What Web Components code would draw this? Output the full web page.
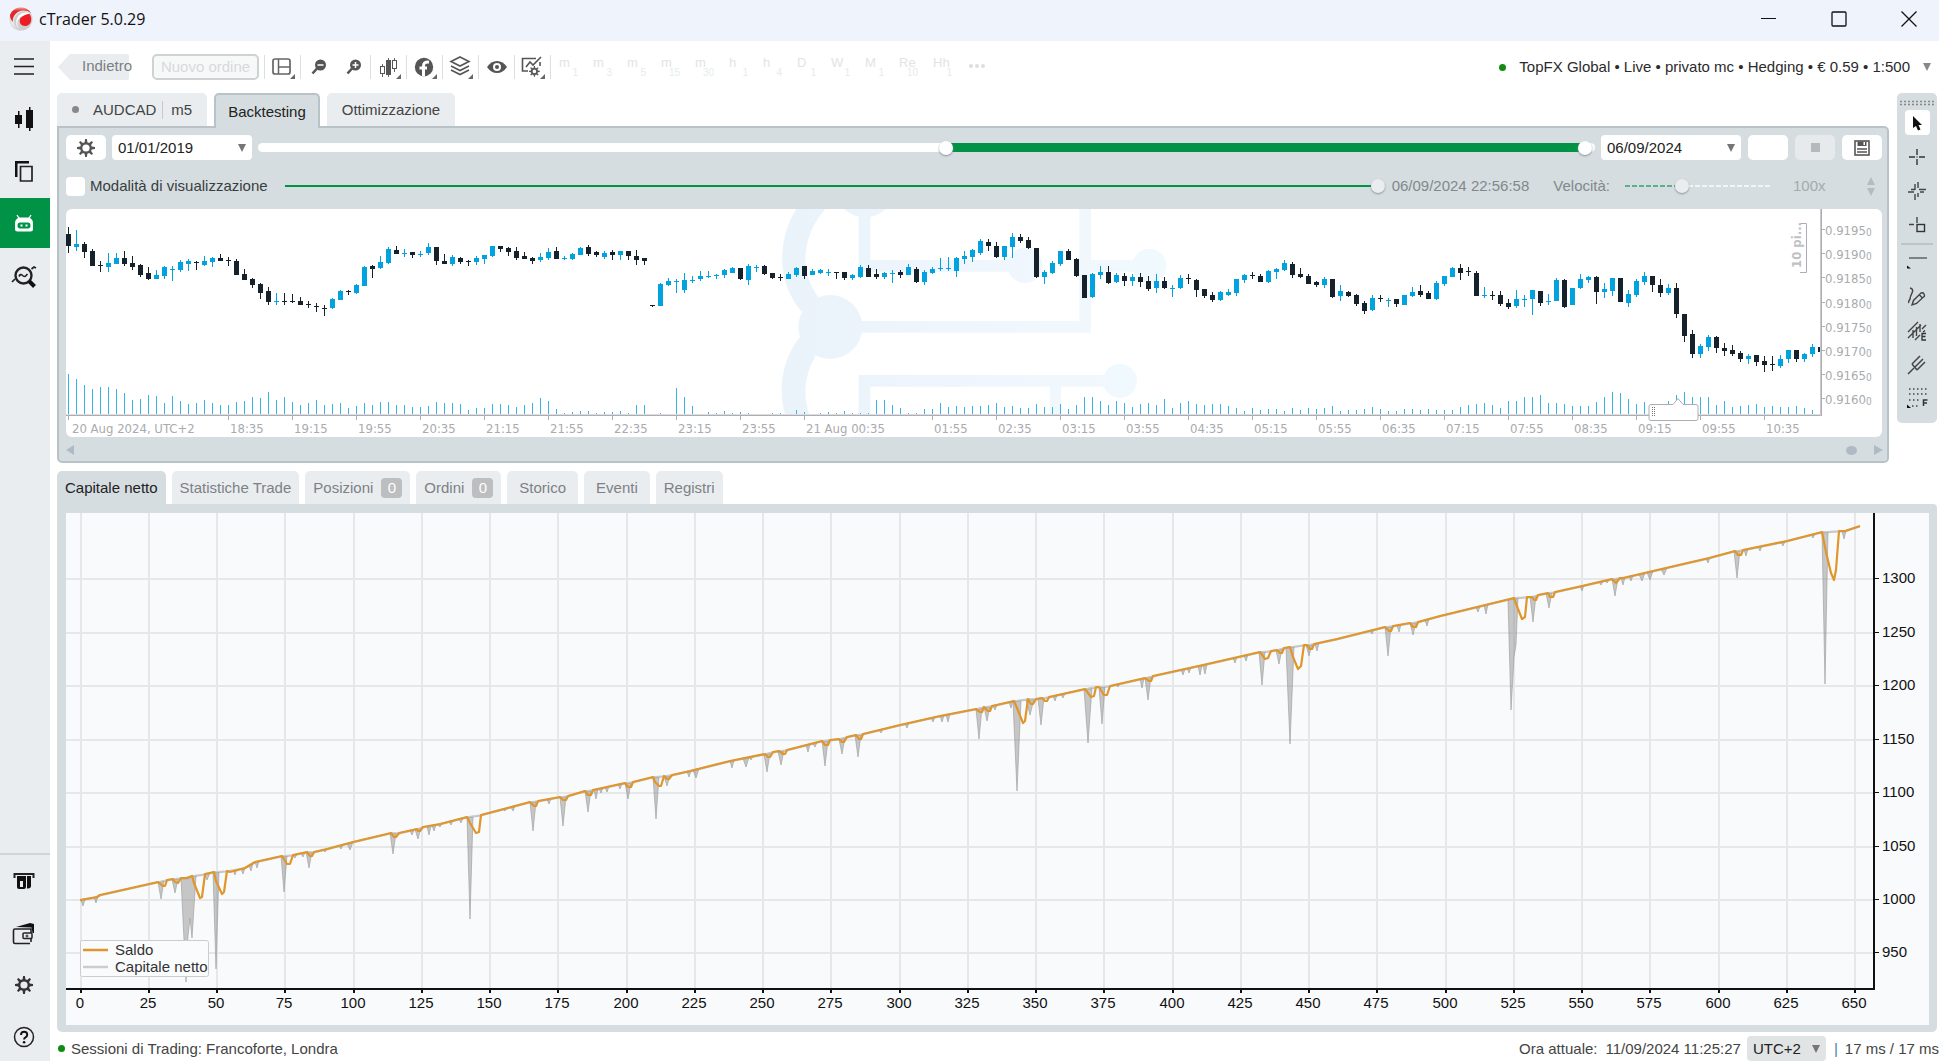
<!DOCTYPE html>
<html lang="it">
<head>
<meta charset="utf-8">
<title>cTrader 5.0.29</title>
<style>
  html, body { margin: 0; height: 100%; }
  body { font: 15px/18px "Liberation Sans", Arial, sans-serif; color: #333; background: #fff; overflow: hidden; }
</style>
</head>
<body>
<ct-app></ct-app>
<script>
const BASE = `
  *, *::before { box-sizing: border-box; }
  button, select, input { font: inherit; color: inherit; margin: 0; padding: 0; border: 0; background: none; border-radius: 0; outline: none; }
  select { appearance: none; }
  svg { display: block; }
`;

class CtElement extends HTMLElement {
  constructor() {
    super();
    this.attachShadow({ mode: 'open' });
  }
  connectedCallback() {
    this.shadowRoot.innerHTML = `<style>${BASE}${this.css()}</style>${this.html()}`;
    this.ready();
  }
  css() { return ''; }
  html() { return ''; }
  ready() {}
}

/* ---------- icons: [width, height, markup] ---------- */
const gearTeeth = (cx, cy, r1, r2, n) => {
  let d = '';
  for (let i = 0; i < n; i++) {
    const a = (i / n) * 2 * Math.PI - Math.PI / 2, w = Math.PI / n;
    const p = (r, t) => (cx + r * Math.cos(t)).toFixed(1) + ' ' + (cy + r * Math.sin(t)).toFixed(1);
    d += (i ? 'L' : 'M') + p(r1, a - w * .62) + 'L' + p(r2, a - w * .25) + 'L' + p(r2, a + w * .25) + 'L' + p(r1, a + w * .62);
  }
  return d + 'Z';
};
const gear = (s, r1, r2, ri) => `<path fill="currentColor" fill-rule="evenodd" d="${gearTeeth(s / 2, s / 2, r1, r2, 8)}M${s / 2 - ri} ${s / 2}a${ri} ${ri} 0 1 0 ${2 * ri} 0a${ri} ${ri} 0 1 0 ${-2 * ri} 0Z"/>`;
const corner = '<path fill="#666" d="M25 19v5h-5z"/>';
const ICONS = {
  logo: [24, 26, `<defs><linearGradient id="g" x1="0" y1="0" x2="0" y2="1"><stop offset="0" stop-color="#f4a39b"/><stop offset=".25" stop-color="#e2272b"/><stop offset="1" stop-color="#f0222a"/></linearGradient></defs>
    <circle cx="12" cy="13" r="11.5" fill="#cfcfcf"/><path d="M1 13A11.5 11.5 0 0 1 22 8C17 3 9 5 6 11c-2 4-1 9 2 12A11.5 11.5 0 0 1 1 13z" fill="#e9e9e9"/>
    <path d="M1 9C3 4 7 1.500 12 1.500c4.500 0 8 2 10 5.500C16 3 9 4 5 10c-1 2-1.500 4-1 6C2 14 1 12 1 9z" fill="url(#g)"/>
    <path d="M20.500 7C13 5 6 10 7.500 19c.5 2 1.500 3 2.500 4C6 17 9 10 17 9z" fill="#fff"/>
    <path d="M11 13c2-3.500 7-5 9.500-5C24 13 22 20 16 20c-4 0-6-3-5-7z" fill="#ee1c24"/>`],
  menu: [22, 20, '<path d="M1 2h20M1 9.500h20M1 17h20" stroke="#222" stroke-width="1.500" fill="none"/>'],
  trade: [20, 24, '<path fill="#111" d="M1 8h7v9H1zM4 4h1.500v17H4zM12 3h7v18h-7zM15 0h1.500v24H15z"/>'],
  copy: [20, 22, '<path fill="none" stroke="#222" stroke-width="1.700" d="M6.500 6.500h11.500v14.500H6.500z"/><path fill="#111" d="M1 1h14v2.500H3.500V17H1z"/>'],
  robot: [20, 18, '<path d="M3 1l2.500 4M17 1l-2.500 4" stroke="#fff" stroke-width="1.300"/><path fill="#fff" fill-rule="evenodd" d="M5 3.500h10Q19 5 19 9v6q0 2.500-2.500 2.500h-13Q1 17.500 1 15V9Q1 5 5 3.500zM6 8.500q-2.500 0-2.500 3T6 14.500h8q2.500 0 2.500-3t-2.500-3z"/><path fill="#fff" d="M6.500 10.500h2v2h-2zM11.500 10.500h2v2h-2z"/>'],
  analyze: [26, 24, '<circle cx="12.500" cy="10.500" r="8" fill="none" stroke="#222" stroke-width="2.400"/><path d="M18 16l5.500 5.500" stroke="#111" stroke-width="4"/><path d="M8 11.500q1.500-3 3-1.500t2.500 1.500 3-2.500" fill="none" stroke="#222" stroke-width="1.700"/><path d="M1 17l3-3M20.500 4l2.500-2 2 1" fill="none" stroke="#222" stroke-width="1.700"/>'],
  atm: [24, 18, '<path d="M2.500 6V2h19v4" fill="none" stroke="#222" stroke-width="2"/><path fill="#111" fill-rule="evenodd" d="M5 4h9v11q0 2-2 2H7q-2 0-2-2zM8 9v6h3V9zM15 4h4v10q0 2-3 2.500h-1z"/>'],
  wallet: [24, 24, '<path fill="none" stroke="#222" stroke-width="1.600" d="M18 22.500H3q-1.500 0-1.500-1.500V9.500Q1.500 8 3 8h16v4M19 18v3"/><path fill="#111" d="M4 6l14-4 4 1v9h-1.500l-1-5.500z"/><rect x="11" y="12" width="9" height="5.500" rx="1" fill="none" stroke="#222" stroke-width="1.500"/><path d="M15 13.500v3M13.500 15h3" stroke="#222"/>'],
  settings: [18, 18, gear(18, 6, 9, 3.6)],
  help: [22, 22, '<circle cx="11" cy="11" r="9.500" fill="none" stroke="#222" stroke-width="1.500"/><path d="M8 9q0-3.300 3.100-3.300T14.200 8.800Q14.200 10.500 12.500 11.300 11.100 12 11.100 13.500" fill="none" stroke="#111" stroke-width="2"/><circle cx="11.100" cy="16.200" r="1.300" fill="#111"/>'],
  layout: [26, 24, '<rect x="3" y="4" width="17" height="15" rx="2" fill="none" stroke="#666" stroke-width="1.700"/><path d="M8.500 4v15M9 12h11" stroke="#666" stroke-width="1.500"/>' + corner],
  zoomout: [16, 16, '<circle cx="9.500" cy="6" r="5.500" fill="#555"/><path d="M6 9.500L1.500 14.500" stroke="#555" stroke-width="2.600"/><path d="M6.500 6h6" stroke="#fff" stroke-width="1.500"/>'],
  zoomin: [16, 16, '<circle cx="9.500" cy="6" r="5.500" fill="#555"/><path d="M6 9.500L1.500 14.500" stroke="#555" stroke-width="2.600"/><path d="M6.500 6h6M9.500 3v6" stroke="#fff" stroke-width="1.500"/>'],
  candles: [26, 24, '<path d="M6.500 9v13M12.500 3v19M18.500 3v14" stroke="#666" stroke-width="1"/><rect x="4.500" y="11.500" width="4" height="7" fill="#fff" stroke="#555"/><rect x="10" y="5" width="5" height="15" fill="#555"/><rect x="16.500" y="5.500" width="4" height="8" fill="#fff" stroke="#555"/>' + corner],
  indicator: [26, 24, '<circle cx="12" cy="12" r="9.200" fill="#555"/><path d="M11.500 21V11q0-4.500 5.500-3.800M7.500 13h7.500" stroke="#fff" stroke-width="3" fill="none"/>' + corner],
  layers: [26, 24, '<path d="M12 2l9 4.500-9 4.500-9-4.500zM3 11l9 4.500 9-4.500M3 15l9 4.500 9-4.500" fill="none" stroke="#555" stroke-width="1.600"/>' + corner],
  eye: [22, 14, '<path fill="#555" d="M1 7Q5 1 11 1t10 6q-4 6-10 6T1 7z"/><circle cx="11" cy="7" r="4" fill="#fff"/><circle cx="11" cy="7" r="2" fill="#555"/>'],
  chartset: [26, 24, '<path d="M8 16H2.500V3.500H16M20 7v4" fill="none" stroke="#555" stroke-width="1.600"/><path d="M6 12l4-5 3 3 8-8" fill="none" stroke="#555" stroke-width="1.600"/><g transform="translate(9 11) scale(.6)" color="#555">' + gear(18, 6, 9, 3) + '</g>' + corner],
  save: [16, 16, '<rect x="1" y="1" width="14" height="14" fill="none" stroke="#555" stroke-width="1.600"/><path fill="#555" d="M3.500 1.500h9V6h-9z"/><path fill="#fff" d="M9.500 2h1.500v3H9.500z"/><path d="M3 9h10M3 12h10" stroke="#555" stroke-width="1.300"/>'],
  cursor: [12, 16, '<path fill="#111" d="M2 1l9 9H7.500l2 4.500-2.500 1-2-4.500L2 13z"/>'],
  cross: [18, 18, '<path d="M9 1v6M9 11v6M1 9h6M11 9h6M9 8.500v1" stroke="#333" stroke-width="1.400"/>'],
  cross2: [20, 20, '<path d="M8 3v6M8 13v6M11 1v6M11 12v4M1 11h6M13 11h4M4 8.500h4M12 8.500h7" stroke="#444" stroke-width="1.400"/>'],
  crossbox: [18, 18, '<path d="M9 1v6M1 8.500h5" stroke="#444" stroke-width="1.400"/><rect x="9" y="8.500" width="7.500" height="7" fill="none" stroke="#333" stroke-width="1.400"/>'],
  line: [22, 14, '<path d="M3 2h18" stroke="#444" stroke-width="1.200"/><path fill="#111" d="M1 9.500l4 3H1z"/>'],
  pen: [20, 22, '<path d="M3 2q4 1 2 5T3 13q-2 3-1 4" fill="none" stroke="#444" stroke-width="1.500"/><path d="M5 19l1.500-4.500L14 7q2-1 3 1t0 2.500L9.500 17.500zM12 8.500l3.500 3.500" fill="none" stroke="#444" stroke-width="1.400"/>'],
  channel: [20, 20, '<path d="M1 11L11 1M1 17L14 4M6 9v8M9.500 6v9M13 3v8M8 19l5-5M15 8l4-4" stroke="#444" stroke-width="1.400"/><path d="M19 12.500h-4V19h4M15 15.500h3.500M16 11l2-1.500" fill="none" stroke="#333" stroke-width="1.300"/>'],
  fork: [20, 20, '<path d="M1 19l6-6M5 9l5 6M5 9L13 1M7.500 12.500L16 4M10 15l8-8" fill="none" stroke="#444" stroke-width="1.500"/>'],
  fib: [22, 24, '<path d="M3 2h19M3 7h19M3 13h11M6 19h8" stroke="#444" stroke-width="1.400" stroke-dasharray="1.500 2.500"/><path d="M17.500 19v-6h4M17.500 16h3.500" fill="none" stroke="#333" stroke-width="1.500"/><path fill="#111" d="M1 17.500l4 3.500H1z"/>'],
  min: [16, 16, '<path d="M0 7.500h15" stroke="#111"/>'],
  max: [16, 16, '<rect x="1" y="1" width="14" height="14" rx="1" fill="none" stroke="#111" stroke-width="1.300"/>'],
  close: [16, 16, '<path d="M.5.5l15 15M15.500.5l-15 15" stroke="#111" stroke-width="1.300"/>'],
  down: [8, 8, '<path fill="currentColor" d="M0 0h8L4 8z"/>'],
  up: [8, 8, '<path fill="currentColor" d="M0 8h8L4 0z"/>'],
  left: [8, 10, '<path fill="currentColor" d="M8 0v10L0 5z"/>'],
  right: [10, 10, '<path fill="currentColor" d="M0 0v10l9-5z"/>'],
  dots: [20, 6, '<circle cx="4" cy="3" r="2" fill="#dcdfe1"/><circle cx="10" cy="3" r="2" fill="#dcdfe1"/><circle cx="16" cy="3" r="2" fill="#dcdfe1"/>'],
  back: [72, 26, '<path fill="#e9edf0" d="M1 13L13 0H70q2 0 2 2v22q0 2-2 2H13z"/>'],
  grip: [36, 6, '<path d="M1 1.500h35M1 4.500h35" stroke="#888" stroke-width="1.600" stroke-dasharray="2 2"/>']
};
customElements.define('ct-icon', class extends CtElement {
  css() { return ':host{display:block;flex:none}'; }
  html() {
    const [w, h, body] = ICONS[this.getAttribute('name')];
    return `<svg width="${w}" height="${h}" viewBox="0 0 ${w} ${h}" aria-hidden="true">${body}</svg>`;
  }
});

/* ---------- drop-down ---------- */
customElements.define('ct-select', class extends CtElement {
  css() {
    return `:host{display:block;flex:none}
      .box{display:grid;align-items:center;height:25px;background:var(--bg,#fff);border-radius:4px}
      select,ct-icon{grid-area:1/1}
      select{height:25px;width:100%;padding:0 6px;color:#222}
      ct-icon{justify-self:end;margin-right:6px;color:#757575;pointer-events:none}`;
  }
  html() {
    return `<div class="box"><select aria-label="${this.getAttribute('label')}"><option>${this.getAttribute('value')}</option></select><ct-icon name="down"></ct-icon></div>`;
  }
});

/* ---------- title bar ---------- */
customElements.define('ct-titlebar', class extends CtElement {
  css() {
    return `:host{display:flex;align-items:center;height:41px;padding:0 22px 4px 9px;background:#eff3fb;font:16px/22px "Open Sans","Noto Sans",sans-serif;color:#111}
      span{flex:1;margin-left:6px}
      .ctl{display:flex;gap:54px}
      button{display:block}`;
  }
  html() {
    return `<ct-icon name="logo"></ct-icon><span>cTrader 5.0.29</span>
      <div class="ctl"><button aria-label="Riduci"><ct-icon name="min"></ct-icon></button><button aria-label="Ingrandisci"><ct-icon name="max"></ct-icon></button><button aria-label="Chiudi"><ct-icon name="close"></ct-icon></button></div>`;
  }
});

/* ---------- left navigation ---------- */
customElements.define('ct-sidenav', class extends CtElement {
  css() {
    return `:host{display:flex;flex-direction:column;width:50px;flex:none;background:#e9edf0;overflow:hidden}
      nav{display:flex;flex-direction:column}
      button{display:grid;place-items:center;width:48px;height:52px;flex:none}
      .on{width:50px;height:50px;margin:1px 0 3px;background:#009345;padding-right:2px}
      .foot{margin-top:auto;margin-bottom:-2px;border-top:2px solid #cfd5d8}`;
  }
  html() {
    const b = ([n, l], c = '') => `<button class="${c}" aria-label="${l}"><ct-icon name="${n}"></ct-icon></button>`;
    return `<nav>${b(['menu', 'Menu'])}${b(['trade', 'Trade'])}${b(['copy', 'Copy'])}${b(['robot', 'Algo'], 'on')}${b(['analyze', 'Analisi'])}</nav>
      <nav class="foot">${b(['atm', 'Deposita'])}${b(['wallet', 'Preleva'])}${b(['settings', 'Impostazioni'])}${b(['help', 'Aiuto'])}</nav>`;
  }
});

/* ---------- main tool bar ---------- */
customElements.define('ct-toolbar', class extends CtElement {
  css() {
    return `:host{display:flex;align-items:center;height:52px}
      .back{display:grid;align-items:center;width:72px;height:26px;color:#7b7f82;text-align:left}
      .back>*{grid-area:1/1}
      .back span{padding:0 0 2px 25px;white-space:nowrap}
      .new{width:107px;height:26px;margin-left:23px;border:2px solid #cdd2d4;border-radius:5px;background:#f7f9f9;color:#d6dadc;white-space:nowrap}
      .set{display:flex;align-items:center;margin-left:5px}
      .set button{display:grid;place-items:center;width:36px;height:24px;border-left:1px solid #dcdfe1}
      .set .n{border-left-color:transparent;width:34px}
      .set .end{border-right:1px solid #dcdfe1;width:37px}
      .tf{display:flex;margin-left:8px;color:#e1e4e6;font-size:13px;line-height:16px}
      .tf button{display:grid;grid-template-columns:19px;width:34px;height:24px;align-items:start;justify-items:start}
      .tf button>*{grid-area:1/1}
      sub{font-size:10px;line-height:12px;margin-top:12px;justify-self:end;vertical-align:baseline;color:#e6eced}
      .tf ct-icon{padding-top:8px}
      .acc{display:flex;align-items:center;margin-left:auto;padding-right:8px;color:#2b2b2b;white-space:nowrap}
      .dot{width:7px;height:7px;border-radius:50%;background:#118c11;margin-right:13px}
      .acc ct-icon{margin-left:13px;color:#888}`;
  }
  html() {
    const tf = [['m', 1], ['m', 3], ['m', 5], ['m', 15], ['m', 30], ['h', 1], ['h', 4], ['D', 1], ['W', 1], ['M', 1], ['Re', 10], ['Hh', 1]];
    const b = (n, l, c = '') => `<button class="${c}" aria-label="${l}"><ct-icon name="${n}"></ct-icon></button>`;
    return `<button class="back"><ct-icon name="back"></ct-icon><span>Indietro</span></button>
      <button class="new">Nuovo ordine</button>
      <div class="set">${b('layout', 'Layout')}${b('zoomout', 'Riduci zoom')}${b('zoomin', 'Aumenta zoom', 'n')}${b('candles', 'Tipo di grafico')}${b('indicator', 'Indicatori')}${b('layers', 'Oggetti')}${b('eye', 'Visibilità')}${b('chartset', 'Modelli', 'end')}</div>
      <div class="tf">${tf.map(([a, n]) => `<button><span>${a}</span><sub>${n}</sub></button>`).join('')}<ct-icon name="dots"></ct-icon></div>
      <div class="acc"><i class="dot"></i><span>TopFX Global • Live • privato mc • Hedging • € 0.59 • 1:500</span><ct-icon name="down"></ct-icon></div>`;
  }
});

/* ---------- tabs ---------- */
customElements.define('ct-tab', class extends CtElement {
  css() {
    return `:host{display:block}
      button{display:flex;align-items:center;justify-content:center;gap:8px;height:33px;padding:0 var(--pad,15px);background:#e9edf0;border-radius:5px 5px 0 0;color:var(--ink,#444);white-space:nowrap}
      :host([active]) button{background:#d5dde0;color:#222}
      :host([outlined]) button{height:35px;margin-bottom:-2px;border:2px solid #b9c3c7;border-bottom:0;padding:0 12px}
      b{min-width:21px;height:20px;border-radius:4px;background:#bcbebf;color:#fff;font:15px/20px "Liberation Sans",Arial,sans-serif;text-align:center}`;
  }
  html() {
    const n = this.getAttribute('count');
    return `<button role="tab"><slot></slot>${n === null ? '' : `<b>${n}</b>`}</button>`;
  }
});

/* ---------- backtesting controls ---------- */
customElements.define('ct-controls', class extends CtElement {
  css() {
    return `:host{display:block}
      .row{display:flex;align-items:center}
      .r1{height:25px;gap:6px}
      .r2{height:20px;margin-top:16px}
      .btn{display:grid;place-items:center;width:40px;height:25px;border-radius:5px;background:#fff;color:#555}
      .btn.off{background:#e6eaec}
      .btn i{width:9px;height:9px;background:#b5b9bb}
      .btns{display:flex;gap:7px;margin-left:1px}
      .dual{flex:1;display:grid;align-items:center;height:14px}
      .dual>*{grid-area:1/1}
      .dual input{width:100%;pointer-events:none}
      .track{height:9px;border-radius:5px;background:linear-gradient(90deg,#fff 51.5%,#009345 51.5% 99.2%,#fff 99.2%)}
      input[type=range]{appearance:none;height:14px}
      input[type=range]::-webkit-slider-runnable-track{height:14px}
      input[type=range]::-webkit-slider-thumb{appearance:none;width:14px;height:14px;border-radius:50%;background:#fff;box-shadow:0 1px 2px #8a9296;pointer-events:auto}
      input[type=checkbox]{appearance:none;flex:none;width:19px;height:19px;border-radius:4px;background:#fff;margin-right:5px}
      label{display:flex;align-items:center;flex:none;color:#3a3d3f;white-space:nowrap}
      .play{flex:1;min-width:0;margin-left:17px}
      .play::-webkit-slider-runnable-track{background:linear-gradient(#009345,#009345) center/100% 2px no-repeat}
      .dash{flex:none;display:grid;align-items:center;width:146px;margin-left:15px}
      .dash>*{grid-area:1/1}
      .speed{width:146px}
      .dash i{height:2px;background:repeating-linear-gradient(90deg,transparent 0 5px,#d5dde0 5px 7px),linear-gradient(90deg,#5bb286 38%,#f2f4f5 38%)}
      input.play::-webkit-slider-thumb,input.speed::-webkit-slider-thumb{background:#e9edef}
      time,.v{color:#83888b;margin-left:7px;white-space:nowrap}
      .v{margin-left:24px}
      .spin{display:flex;align-items:center;width:82px;flex:none;margin-left:22px;margin-right:7px;color:#a4aaad}
      .spin input{flex:1;min-width:0}
      .arrows{display:flex;flex-direction:column;gap:3px;color:#b5bbbe}
      .arrows button{display:block}`;
  }
  html() {
    return `<div class="row r1">
        <button class="btn" aria-label="Impostazioni"><ct-icon name="settings"></ct-icon></button>
        <ct-select label="Data di inizio" value="01/01/2019" style="width:140px"></ct-select>
        <div class="dual"><div class="track"></div>
          <input type="range" aria-label="Inizio periodo" min="0" max="1000" value="515">
          <input type="range" aria-label="Fine periodo" min="0" max="1000" value="998"></div>
        <ct-select label="Data di fine" value="06/09/2024" style="width:140px"></ct-select>
        <div class="btns"><button class="btn" aria-label="Avvia"></button><button class="btn off" aria-label="Ferma"><i></i></button><button class="btn" aria-label="Salva"><ct-icon name="save"></ct-icon></button></div>
      </div>
      <div class="row r2">
        <label><input type="checkbox">Modalità di visualizzazione</label>
        <input class="play" type="range" aria-label="Avanzamento" min="0" max="100" value="100">
        <time>06/09/2024 22:56:58</time>
        <label class="v" for="speed">Velocità:</label>
        <div class="dash"><i></i><input class="speed" id="speed" type="range" min="0" max="1000" value="378"></div>
        <div class="spin"><input type="text" value="100x" aria-label="Valore velocità"><div class="arrows"><button aria-label="Più"><ct-icon name="up"></ct-icon></button><button aria-label="Meno"><ct-icon name="down"></ct-icon></button></div></div>
      </div>`;
  }
});

/* ---------- price chart ---------- */
/* Each candle: high, body top, body bottom, low in thirds of a pixel, then u(p) or d(own). */
const CANDLES = `81 102 138 159d,90 132 141 153u,126 132 156 174d,147 153 198 198d,183 195 198 216d,159 189 201 216u,159 174 192 192u,153 174 192 198d,168 189 201 210d,192 195 225 231d,201 219 237 240d,210 225 237 237u,198 201 228 237u,198 207 210 243u,180 186 210 216u,177 183 192 213u,183 186 189 210d,168 183 195 198u,171 174 186 201u,162 174 183 183d,171 180 183 198d,177 183 225 225d,207 222 240 240d,234 237 255 264d,249 252 279 297d,261 273 306 315d,279 302 305 315u,279 302 305 315d,282 302 305 309d,291 303 315 315d,303 312 315 324d,309 318 321 336d,315 323 326 348d,294 297 324 327u,270 273 300 300u,270 273 276 285d,252 255 279 282u,198 201 258 258u,195 198 207 234d,168 186 204 207u,141 147 189 192u,138 150 162 162d,147 159 162 171u,156 156 165 174d,153 162 165 171u,129 141 159 165u,141 141 183 195d,162 183 192 192d,165 171 192 198u,171 174 186 192d,180 183 186 198d,168 174 186 195u,165 165 177 192u,138 138 168 171u,138 138 147 156d,141 144 156 168d,141 153 174 180d,156 168 177 177d,171 174 183 192d,159 171 180 186u,144 156 174 180u,141 153 177 177d,168 174 177 180u,159 162 177 180u,141 144 165 165u,135 141 162 168d,153 156 165 171d,153 159 171 177u,150 156 165 180d,153 153 165 180u,153 153 168 180d,150 168 180 195d,174 174 183 195d,315 315 318 321d,249 252 318 318u,234 243 255 258u,237 243 246 279u,219 240 270 279u,228 240 243 249u,213 228 237 243u,213 228 231 234u,222 225 228 237u,207 210 225 234u,201 204 219 219u,204 204 237 240d,192 198 240 255u,195 201 204 216u,195 198 222 225d,219 219 234 237d,222 231 234 243d,216 222 237 237u,201 204 225 231u,198 198 228 237d,207 213 225 225u,207 210 219 222u,207 215 218 228u,216 216 219 237d,216 216 234 240d,222 225 234 240u,195 201 231 234u,195 204 231 231d,207 222 231 237d,216 219 231 237u,210 219 222 249u,210 216 225 234d,192 201 225 225u,201 207 246 249d,210 216 246 255u,201 207 219 222u,174 204 207 213u,171 204 207 213u,171 174 213 231u,153 168 177 192u,147 150 171 186u,117 123 159 165u,117 126 138 153d,126 138 171 174d,138 138 171 180u,99 111 141 174u,102 111 123 129d,111 120 144 147d,144 144 231 234d,210 216 231 252u,183 189 219 222u,153 153 192 198u,147 153 180 180d,174 177 228 231d,225 225 294 294d,219 222 291 294u,198 216 225 237u,198 216 249 252d,219 225 246 249u,219 228 243 258d,222 231 243 258u,219 231 246 261d,228 243 267 273d,222 243 264 279u,231 243 264 267d,255 264 267 291u,225 234 264 267u,222 234 237 252d,237 240 270 291d,267 267 288 294d,276 285 300 306d,273 276 300 303u,267 276 285 288u,237 237 279 288u,222 225 240 249u,216 225 228 237d,222 228 246 246d,210 213 246 249u,204 207 216 237u,180 189 210 213u,186 192 225 234d,204 222 231 234d,222 228 252 252d,243 246 255 261d,231 237 255 264u,237 237 291 294d,255 273 288 303u,273 276 288 291d,282 285 312 318d,303 309 333 342d,285 294 330 333u,285 294 297 306d,294 300 303 321u,297 297 312 321d,285 285 315 315u,261 276 288 291u,255 273 285 291d,273 279 297 297d,243 249 297 300u,228 228 252 258u,201 204 231 231u,192 204 219 240d,201 213 216 228d,213 219 288 288d,261 285 288 294u,273 285 288 300d,273 285 312 318d,297 309 321 327d,270 297 318 324u,285 297 300 321u,270 270 297 345u,273 273 309 318d,282 303 306 315u,234 240 303 303u,237 240 321 324d,264 264 315 315u,222 237 264 267u,228 231 240 249u,228 231 276 312d,249 267 276 294u,234 234 273 288u,234 234 306 306d,270 282 309 321u,237 243 285 291u,216 228 246 255u,228 228 255 276d,237 255 279 291d,252 264 279 285u,249 264 342 354d,342 342 408 426d,390 402 462 474d,432 438 462 474u,405 411 441 453u,408 411 444 459d,429 444 453 468d,435 450 462 468d,453 459 477 486d,462 468 477 492u,465 465 486 498d,468 483 495 516d,468 492 495 513d,465 477 498 504u,450 450 477 489u,450 450 477 486d,459 462 477 486u,432 441 462 471u,441 441 456 456d`
  .split(',').map(s => [...s.slice(0, -1).split(' ').map(Number), s.slice(-1)]);
const VOLUMES = '522 537 555 567 561 561 567 579 600 597 585 588 609 588 603 612 609 600 609 615 615 606 603 591 594 576 600 591 606 615 609 600 615 612 609 624 618 609 615 606 606 615 615 621 621 618 606 609 609 612 630 624 624 612 612 615 621 615 609 594 603 627 639 636 633 633 639 636 636 633 639 615 615 645 639 642 564 591 618 642 636 639 633 639 636 639 645 645 639 639 642 630 636 642 639 636 639 633 639 639 639 600 600 615 624 639 639 627 627 609 621 618 621 618 618 615 609 621 618 624 624 612 621 621 612 627 615 591 591 603 615 603 609 621 612 609 615 597 624 609 603 612 615 612 612 618 624 633 624 630 627 627 633 624 630 624 627 624 618 633 630 630 627 621 627 633 633 627 627 630 627 630 630 630 621 615 612 609 615 624 603 603 591 591 585 609 609 612 618 618 618 606 591 576 579 597 612 606 620 620 603 585 576 591 591 591 615 603 621 618 615 612 621 618 621 621 618 624 630'
  .split(' ').map(Number);
const TIMES = [[0, '20 Aug 2024, UTC+2'], [20, '18:35'], [28, '19:15'], [36, '19:55'], [44, '20:35'], [52, '21:15'], [60, '21:55'], [68, '22:35'], [76, '23:15'], [84, '23:55'], [92, '21 Aug 00:35'], [108, '01:55'], [116, '02:35'], [124, '03:15'], [132, '03:55'], [140, '04:35'], [148, '05:15'], [156, '05:55'], [164, '06:35'], [172, '07:15'], [180, '07:55'], [188, '08:35'], [196, '09:15'], [204, '09:55'], [212, '10:35']];

class ChartElement extends CtElement {
  ready() {
    new ResizeObserver(() => this.paint()).observe(this);
    this.paint();
  }
  paint() {
    const w = this.clientWidth, h = this.clientHeight;
    if (!w || !h) return;
    const svg = this.shadowRoot.querySelector('svg');
    svg.setAttribute('width', w);
    svg.setAttribute('height', h);
    svg.innerHTML = this.draw(w, h);
  }
}

customElements.define('ct-price-chart', class extends ChartElement {
  css() {
    return `:host{display:block;height:228px;background:#fff;border-radius:6px;overflow:hidden}
      text{font:13px "DejaVu Sans Condensed","Noto Sans",sans-serif;fill:#a9abae}
      .s{font-size:10px}
      .b{font-size:13px;font-weight:bold;fill:#bfc1c3}`;
  }
  html() { return '<svg role="img" aria-label="Grafico AUDCAD m5"></svg>'; }
  draw(w) {
    const axis = w - 61, step = (axis - 11) / 218;
    const X = i => Math.round(2 + step * i), Y = v => Math.round(v / 3) - 9;
    let s = `<clipPath id="c"><rect width="${axis}" height="207"/></clipPath>
      <defs><linearGradient id="f" gradientUnits="userSpaceOnUse" x1="400" y1="0" x2="1600" y2="0"><stop offset="0" stop-color="#eaf3fa"/><stop offset=".6" stop-color="#f0f6fd"/><stop offset="1" stop-color="#f0fafd"/></linearGradient></defs>
      <g clip-path="url(#c)"><g transform="translate(${Math.round(w * .316)} -9) scale(.3333)" fill="url(#f)">
      <path d="M473 20Q427 90 426 175Q428 270 485 335L535 292Q496 240 496 175Q498 90 562 20zM480 410Q425 480 425 570Q425 610 437 650H510Q496 610 496 570Q498 515 527 468z"/>
      <circle cx="571" cy="381" r="96"/><circle cx="675" cy="-40" r="92"/>
      <path d="M656 40h35v140h430v35H656zM660 363h658V20h35v160h140v35h-140v183H660zM656 525h750v35h-143v90h-33v-90H691v90h-35z"/>
      <circle cx="1155" cy="196" r="53"/><circle cx="1528" cy="197" r="51"/><circle cx="1440" cy="543" r="51"/></g>`;
    VOLUMES.forEach((v, i) => { s += `<rect x="${X(i)}" y="${Y(v)}" width="1" height="${Y(645) - Y(v)}" fill="#35b4e6"/>`; });
    CANDLES.forEach(([a, b, c, d, k], i) => {
      const f = k === 'u' ? '#00a3df' : '#15222b';
      s += `<rect x="${X(i)}" y="${Y(a)}" width="1" height="${Math.max(1, Y(d) - Y(a))}" fill="${f}"/><rect x="${X(i) - 2}" y="${Y(b)}" width="5" height="${Math.max(1, Y(c) - Y(b))}" fill="${f}"/>`;
    });
    s += `</g><path d="M0 205.500H${axis}" stroke="#dddde0"/><path d="M0 206.500H${axis}M${axis + .5} 0V207" stroke="#aeadb3"/><path d="M${axis - .5} 0V207" stroke="#c9c9cd"/>`;
    TIMES.forEach(([i, t]) => {
      s += `<path d="M${X(i) + .5} 207v4" stroke="#aeadb3"/><text x="${X(i) + (i ? 2 : 4)}" y="224">${t}</text>`;
    });
    for (let k = 0; k < 8; k++) {
      const y = Math.round(20 + 24.2 * k);
      s += `<path d="M${axis + 1} ${y + .5}h3" stroke="#aeadb3"/><text x="${axis + 4}" y="${y + 6}">${(0.9195 - k * .0005).toFixed(4)}<tspan class="s" dy="1">0</tspan></text>`;
    }
    s += `<path d="M${axis - 21} 14.500h6.500V63.500h-6.500" fill="none" stroke="#aeadb3"/>
      <text class="b" transform="translate(${axis - 20} 59) rotate(-90)">10 pi...</text>`;
    const bx = axis - 172;
    s += `<path d="M${bx + 2} 195.500h22l5-6 5 6h13q2 0 2 2v12q0 2-2 2h-45q-2 0-2-2v-12q0-2 2-2z" fill="#fff" stroke="#aeadb3"/>
      <path d="M${bx + 3.500} 198v9M${bx + 5.500} 198v9" stroke="#777" stroke-dasharray="1 1"/>`;
    return s;
  }
});

/* ---------- equity chart ---------- */
const BALANCE = '80,900 97,897 100,895 158,882 163,886 165,886 167,880 173,879 175,882 178,883 181,878 187,878 192,876 194,883 200,898 202,897 205,874 214,872 216,881 222,894 224,892 227,871 230,872 245,868 255,862 282,856 287,864 290,864 293,855 307,852 310,856 312,856 314,852 327,849 353,842 391,833 394,837 396,837 399,833 417,829 418,831 420,831 423,827 440,824 467,817 470,823 476,833 479,832 481,815 530,802 534,806 536,806 538,801 560,797 563,800 566,800 568,796 585,791 588,795 591,795 593,790 625,783 628,787 631,787 633,782 653,777 655,782 659,786 661,786 664,776 667,779 669,779 672,775 690,771 730,761 765,754 768,757 770,757 773,752 779,751 783,754 785,754 787,750 822,741 825,745 828,745 830,740 839,739 842,742 844,742 847,737 856,735 859,739 861,739 863,734 900,725 940,716 976,709 980,712 982,712 984,707 988,711 990,711 992,706 1014,701 1017,708 1023,723 1025,721 1028,699 1031,704 1033,704 1036,699 1042,698 1045,701 1047,701 1049,697 1085,689 1091,697 1094,696 1096,687 1099,687 1104,695 1107,695 1110,686 1145,678 1149,681 1151,681 1153,676 1203,665 1260,652 1265,659 1268,658 1271,651 1277,650 1280,653 1282,653 1284,648 1290,647 1293,657 1298,669 1301,666 1304,645 1307,645 1310,649 1312,649 1314,644 1337,639 1385,627 1389,631 1391,631 1393,626 1410,623 1413,627 1416,627 1418,622 1440,616 1514,598 1518,609 1522,619 1525,617 1527,597 1532,597 1534,600 1536,600 1538,595 1548,593 1550,597 1553,597 1555,592 1582,586 1612,579 1616,583 1620,578 1623,578 1653,571 1709,558 1735,551 1738,555 1741,555 1743,550 1787,541 1822,532 1826,552 1831,573 1834,580 1836,570 1839,531 1845,531 1860,526';
/* The balance without its dips: only the points that reach a new high. */
const TREND = [];
for (const p of BALANCE.split(' ')) {
  const [x, y] = p.split(',').map(Number);
  if (!TREND.length || y <= TREND[TREND.length - 1][1]) TREND.push([x, y]);
}
const DIPS = '83,906,2 96,903,2 161,899,3 175,893,3 207,880,3 216,969,3 235,875,2 243,874,2 251,871,2 257,868,2 284,892,3 295,858,2 303,857,2 309,868,3 325,852,2 341,849,2 350,850,3 393,854,3 412,835,2 418,839,3 429,835,2 434,831,2 440,827,2 451,825,2 461,823,2 470,919,3 505,811,2 513,811,2 533,831,3 549,804,2 563,826,3 588,812,3 596,799,2 601,793,2 607,792,2 620,789,2 628,799,3 656,819,3 667,786,3 689,777,2 696,778,3 732,768,2 746,767,3 751,760,2 767,772,3 781,765,3 808,752,2 815,747,2 825,766,3 842,754,3 858,757,3 881,733,2 907,728,2 933,722,2 942,722,2 948,722,2 979,739,3 987,721,3 995,710,2 1011,708,2 1017,791,4 1030,715,4 1041,725,3 1055,701,2 1063,698,2 1088,743,4 1102,724,3 1118,687,2 1142,688,2 1148,700,3 1183,675,2 1189,673,2 1200,675,2 1205,674,2 1235,663,2 1246,661,2 1262,685,3 1279,664,3 1290,744,4 1309,656,3 1317,651,2 1372,634,2 1388,656,3 1399,632,2 1413,635,3 1427,626,2 1478,612,2 1486,614,2 1533,622,3 1549,608,3 1582,591,2 1601,585,2 1607,583,2 1615,596,3 1623,585,2 1631,581,2 1642,581,3 1650,580,3 1664,575,3 1708,563,2 1737,578,3 1746,556,2 1760,551,2 1783,546,2 1813,538,2 1825,684,3 1844,539,2'
  .split(' ').map(s => s.split(',').map(Number));
const DEEP = ['181,878 184,940 186,982 188,936 190,918 192,938 196,876', '1508,600 1511,710 1514,657 1516,645 1518,597'];

customElements.define('ct-equity-chart', class extends ChartElement {
  css() {
    return `:host{display:block;flex:1;min-height:0;background:#f9fafc;overflow:hidden}
      text{font:15px "Liberation Sans",Arial,sans-serif;fill:#111}
      .m{text-anchor:middle}
      .l{fill:#333}`;
  }
  html() { return '<svg role="img" aria-label="Saldo e capitale netto"></svg>'; }
  draw(w, h) {
    const axis = w - 55, floor = h - 36;
    const kx = axis / 1808, ky = floor / 476;
    const px = x => (x - 66) * kx, py = y => (y - 513) * ky;
    const pts = str => str.split(' ').map(p => { const [x, y] = p.split(','); return px(+x).toFixed(1) + ',' + py(+y).toFixed(1); }).join(' ');
    const top = x => {
      for (let i = 1; i < TREND.length; i++) if (x <= TREND[i][0]) {
        const [a, b] = TREND[i - 1], [c, d] = TREND[i];
        return b + (d - b) * (x - a) / (c - a);
      }
      return 526;
    };
    let s = '', axes = '';
    for (let n = 0; n <= 650; n += 25) {
      const x = Math.round(px(80.6 + n * 2.73));
      s += `<rect x="${x - 1}" width="2" height="${floor}" fill="#e5e7e8"/>`;
      axes += `<rect x="${x - 1}" y="${floor}" width="2" height="4" fill="#111"/><text class="m" x="${x - 1}" y="${floor + 19}">${n}</text>`;
    }
    for (let v = 950; v <= 1300; v += 50) {
      const y = Math.round(py(900 - (v - 1000) * 1.069));
      s += `<rect y="${y - 1}" width="${axis}" height="2" fill="#e5e7e8"/>`;
      axes += `<rect x="${axis}" y="${y - 1}" width="5" height="1" fill="#111"/><text x="${axis + 8}" y="${y + 4}">${v}</text>`;
    }
    const tri = DIPS.map(([x, t, r]) => `${x - r},${top(x - r)} ${x},${t} ${x + r},${top(x + r)}`).concat(DEEP);
    s += `<g fill="#888" fill-opacity=".45" stroke="#999" stroke-opacity=".6">${tri.map(t => `<polygon points="${pts(t)}"/>`).join('')}</g>
      <polyline points="${pts(TREND.map(p => p.join()).join(' '))}" fill="none" stroke="#ccc" stroke-width="1.500"/>
      <polyline points="${pts(TREND.map(([x, y]) => x + ',' + (y + 1)).join(' '))}" fill="none" stroke="#999" stroke-opacity=".5"/>
      <polyline points="${pts(BALANCE)}" fill="none" stroke="#e0962a" stroke-width="2.200" stroke-linejoin="round"/>`;
    s += axes + `<rect y="${floor - 1}" width="${axis + 1}" height="2" fill="#111"/><rect x="${axis - 1}" width="2" height="${floor + 1}" fill="#111"/>`;
    const ly = floor - 49;
    s += `<rect x="14.500" y="${ly + .5}" width="128" height="36" rx="2" fill="#fafbfd" stroke="#ccc"/>
      <path d="M17 ${ly + 10}h25" stroke="#e0962a" stroke-width="2.500"/><path d="M17 ${ly + 27}h25" stroke="#ccc" stroke-width="2.500"/>
      <text class="l" x="49" y="${ly + 15}">Saldo</text><text class="l" x="49" y="${ly + 32}">Capitale netto</text>`;
    return s;
  }
});

/* ---------- drawing tools ---------- */
customElements.define('ct-drawtools', class extends CtElement {
  css() {
    return `:host{display:flex;flex-direction:column;align-items:center;width:40px;flex:none;align-self:flex-start;height:330px;padding-top:7px;background:#d5dde0;border-radius:5px}
      button{display:grid;place-items:center;width:25px;height:34px;flex:none}
      .on{height:25px;margin:4px 0 5px;border-radius:4px;background:#fff}
      hr{width:32px;margin:1px 0;border:0;border-top:2px solid #bcc5c9}`;
  }
  html() {
    const b = (n, l, c = '') => `<button class="${c}" aria-label="${l}"><ct-icon name="${n}"></ct-icon></button>`;
    return `<ct-icon name="grip"></ct-icon>${b('cursor', 'Cursore', 'on')}${b('cross', 'Mirino')}${b('cross2', 'Mirino doppio')}${b('crossbox', 'Misura')}<hr>${b('line', 'Linea')}${b('pen', 'Matita')}${b('channel', 'Canale')}${b('fork', 'Forchetta')}${b('fib', 'Fibonacci')}`;
  }
});

/* ---------- status bar ---------- */
customElements.define('ct-status', class extends CtElement {
  css() {
    return `:host{display:flex;align-items:center;height:29px;padding:4px 0 0 1px;color:#444;white-space:nowrap}
      i{width:7px;height:7px;border-radius:50%;background:#118c11;margin-right:6px}
      .r{display:flex;align-items:center;margin-left:auto}
      ct-select{width:79px;margin:0 8px 0 6px;--bg:#e1e4e5}
      time{margin-left:8px}
      .bar{margin-right:7px;color:#3f7fa8}`;
  }
  html() {
    return `<i></i><span>Sessioni di Trading: Francoforte, Londra</span>
      <div class="r"><span>Ora attuale:</span><time>11/09/2024 11:25:27</time><ct-select label="Fuso orario" value="UTC+2"></ct-select><span class="bar">|</span><span>17 ms / 17 ms</span></div>`;
  }
});

/* ---------- window ---------- */
customElements.define('ct-app', class extends CtElement {
  css() {
    return `:host{display:flex;flex-direction:column;height:100vh}
      .body{display:flex;flex:1;min-height:0}
      main{display:flex;flex-direction:column;flex:1;min-width:0;padding-left:7px}
      .work{display:flex;gap:8px;padding-right:2px}
      .left{flex:1;min-width:0}
      .tabs{display:flex;gap:7px}
      .low{gap:6px;margin-top:8px;--pad:8px;--ink:#7d8184}
      .wide{--pad:12px}
      .sym{display:flex;align-items:center}
      .sym i{width:7px;height:7px;border-radius:50%;background:#888;margin-right:14px}
      .sym span{border-left:1px solid #c5cacd;padding-left:8px;margin-left:6px;line-height:18px}
      .panel{border:2px solid #b9c3c7;border-radius:0 5px 5px 5px;background:#d5dde0;padding:7px 5px 0 7px;height:337px}
      ct-controls{margin-bottom:13px}
      .scroll{display:flex;align-items:center;height:26px;color:#afbac5;gap:17px;margin-right:-2px}
      .scroll i{width:11px;height:9px;border-radius:50%;background:#afbac5;margin-left:auto}
      .frame{flex:1;min-height:0;display:flex;flex-direction:column;background:#d5dde0;border-radius:0 4px 5px 5px;padding:9px 8px 7px 9px;margin-right:2px}`;
  }
  html() {
    return `<ct-titlebar></ct-titlebar>
      <div class="body"><ct-sidenav></ct-sidenav>
        <main><ct-toolbar></ct-toolbar>
          <div class="work"><div class="left">
            <div class="tabs" role="tablist"><ct-tab><span class="sym"><i></i>AUDCAD<span>m5</span></span></ct-tab><ct-tab active outlined>Backtesting</ct-tab><ct-tab>Ottimizzazione</ct-tab></div>
            <div class="panel"><ct-controls></ct-controls><ct-price-chart></ct-price-chart>
              <div class="scroll"><ct-icon name="left"></ct-icon><i></i><ct-icon name="right"></ct-icon></div></div>
          </div><ct-drawtools></ct-drawtools></div>
          <div class="tabs low" role="tablist"><ct-tab active>Capitale netto</ct-tab><ct-tab>Statistiche Trade</ct-tab><ct-tab count="0">Posizioni</ct-tab><ct-tab count="0">Ordini</ct-tab><ct-tab class="wide">Storico</ct-tab><ct-tab class="wide">Eventi</ct-tab><ct-tab>Registri</ct-tab></div>
          <div class="frame"><ct-equity-chart></ct-equity-chart></div>
          <ct-status></ct-status>
        </main></div>`;
  }
});
</script>
</body>
</html>
